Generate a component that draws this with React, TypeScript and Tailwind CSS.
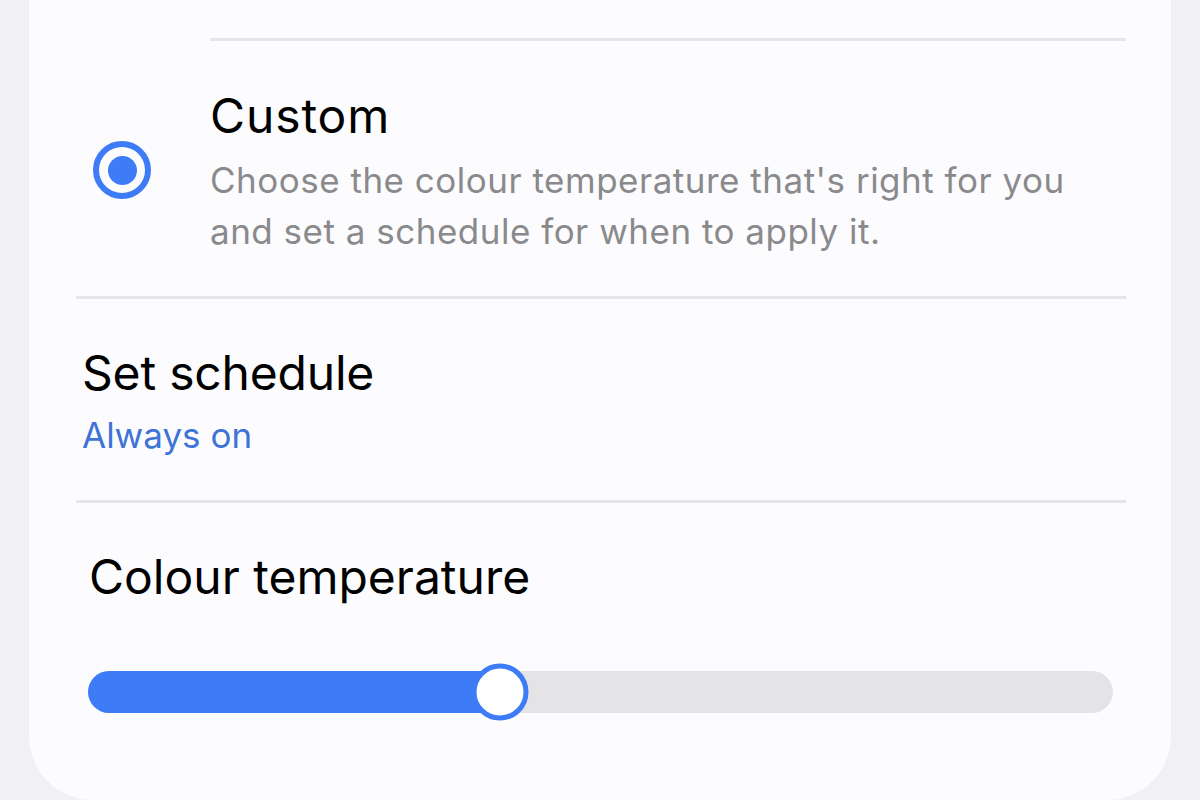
import React from 'react'

const font = { fontFamily: 'Inter, Roboto, "Noto Sans", sans-serif' }

const Divider = ({ className }: { className: string }) => (
    <div className={`h-[3px] bg-[#e6e6e8] ${className}`} />
)

const Radio = () => (
    <div className="w-[58px] h-[58px] rounded-full border-[6px] border-[#3e7bf6] flex items-center justify-center">
        <div className="w-[29px] h-[29px] rounded-full bg-[#3e7bf6]" />
    </div>
)

const Slider = ({ value }: { value: number }) => (
    <div className="relative ml-[59px] mr-[58px] h-[42px] rounded-full bg-[#e4e4e6]">
        <div className="h-full rounded-l-full bg-[#3d7bf7]" style={{ width: `${value}%` }} />
        <div
            className="absolute top-1/2 w-[57px] h-[57px] -translate-x-1/2 -translate-y-1/2 rounded-full bg-white border-[5px] border-[#3e7bf6]"
            style={{ left: `${value}%` }}
        />
    </div>
)

const App: React.FC = () => {
    return (
        <div className="h-[800px] overflow-hidden bg-[#f1f1f3] px-[29px]" style={font}>
            <div className="h-full bg-[#fcfcfe] rounded-b-[64px]">
                <div className="pt-[38px]">
                    <Divider className="ml-[181px] mr-[45px]" />
                </div>

                <div className="flex items-start pt-[46px] pb-[39px]">
                    <div className="w-[181px] pl-[64px] pt-[54px]">
                        <Radio />
                    </div>
                    <div className="pr-[40px]">
                        <p className="text-[48px] leading-[58px] tracking-[0.9px] text-black">Custom</p>
                        <p className="mt-[10px] text-[35px] leading-[51px] tracking-[0.5px] text-[#8a8a8c]">
                            Choose the colour temperature that's right for you
                            <br />
                            and set a schedule for when to apply it.
                        </p>
                    </div>
                </div>

                <Divider className="ml-[47px] mr-[45px]" />

                <div className="pl-[53px] pt-[45px] pb-[41px]">
                    <p className="text-[48px] leading-[58px] tracking-[-0.2px] text-black">Set schedule</p>
                    <p className="mt-[9px] text-[35px] leading-[48px] text-[#3e74d6]">Always on</p>
                </div>

                <Divider className="ml-[47px] mr-[45px]" />

                <div className="pl-[60px] pt-[45px] pb-[65px]">
                    <p className="text-[48px] leading-[58px] text-black">Colour temperature</p>
                </div>

                <Slider value={40.2} />
            </div>
        </div>
    )
}

export default App
